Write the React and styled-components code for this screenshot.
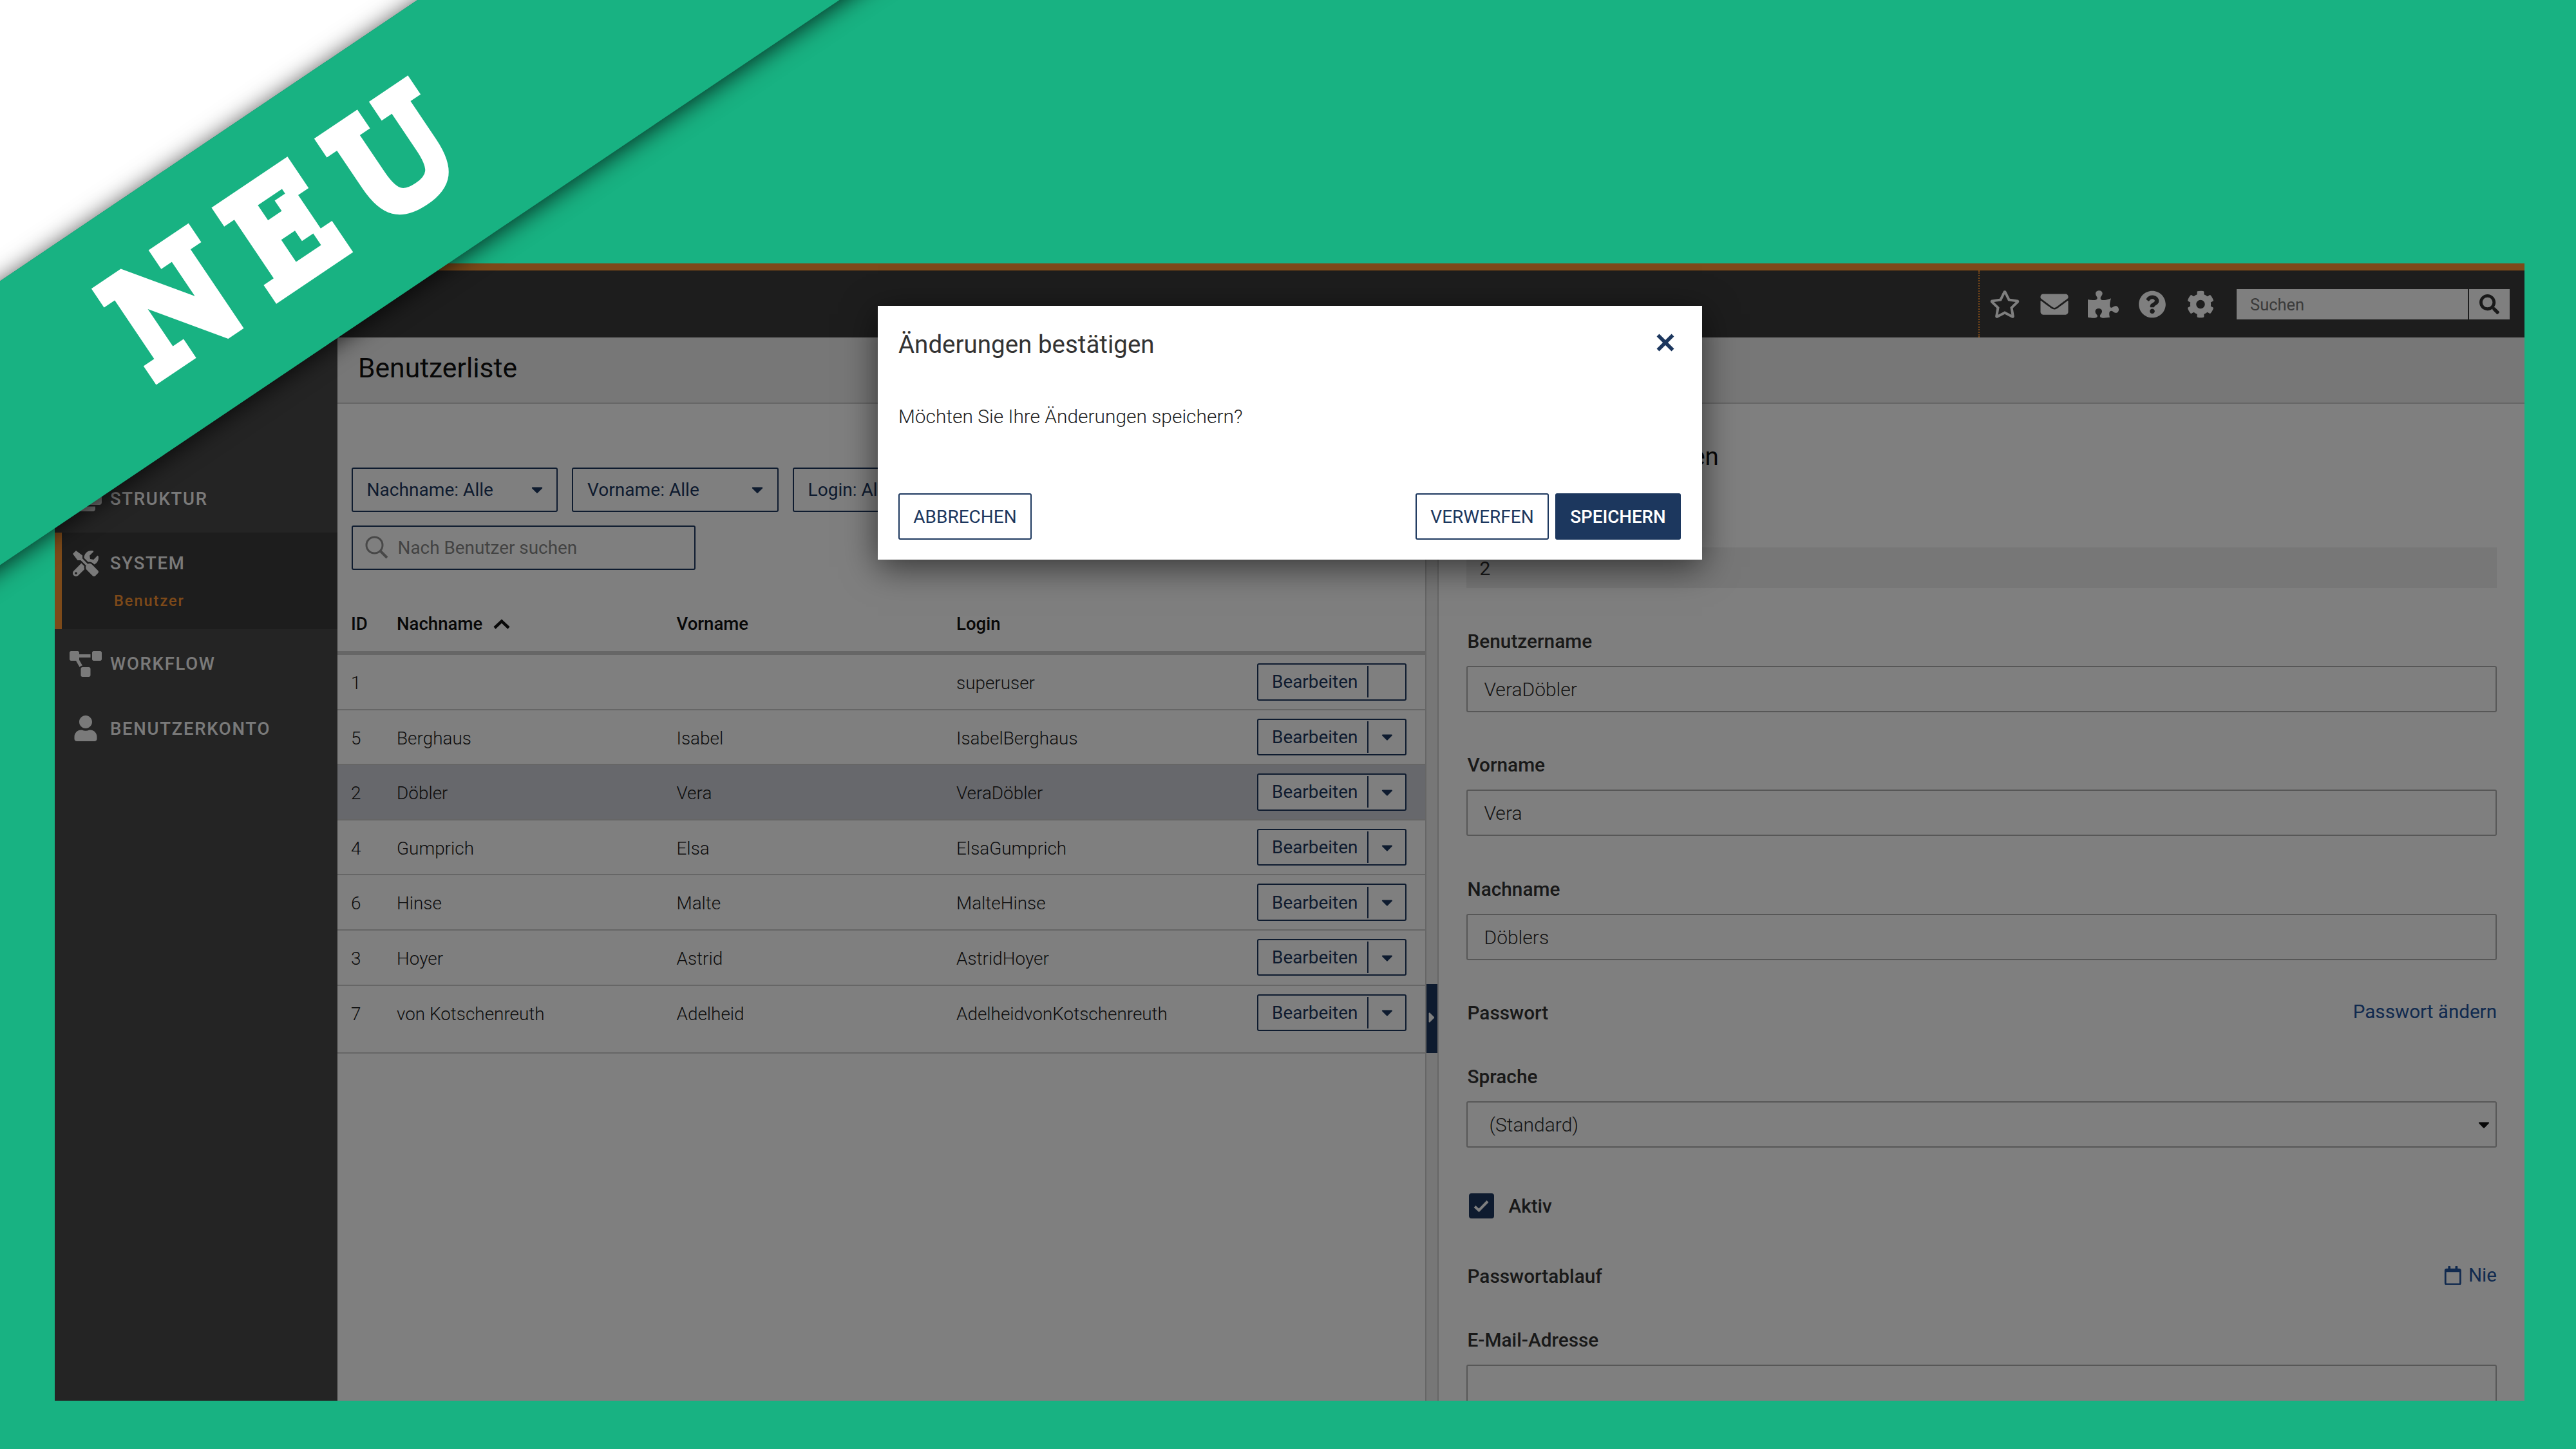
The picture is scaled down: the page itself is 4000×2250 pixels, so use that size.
import React from "react";
import styled, { createGlobalStyle } from "styled-components";
import {
  FaCaretDown,
  FaCaretRight,
  FaClone,
  FaCog,
  FaEnvelope,
  FaProjectDiagram,
  FaPuzzlePiece,
  FaQuestionCircle,
  FaRegCalendar,
  FaRegStar,
  FaSearch,
  FaTools,
  FaUser,
} from "react-icons/fa";

const filters = ["Nachname: Alle", "Vorname: Alle", "Login: Alle"];

const users = [
  { id: 1, nachname: "", vorname: "", login: "superuser", menu: false },
  { id: 5, nachname: "Berghaus", vorname: "Isabel", login: "IsabelBerghaus", menu: true },
  { id: 2, nachname: "Döbler", vorname: "Vera", login: "VeraDöbler", menu: true },
  { id: 4, nachname: "Gumprich", vorname: "Elsa", login: "ElsaGumprich", menu: true },
  { id: 6, nachname: "Hinse", vorname: "Malte", login: "MalteHinse", menu: true },
  { id: 3, nachname: "Hoyer", vorname: "Astrid", login: "AstridHoyer", menu: true },
  {
    id: 7,
    nachname: "von Kotschenreuth",
    vorname: "Adelheid",
    login: "AdelheidvonKotschenreuth",
    menu: true,
  },
];
const selectedId = 2;

function TopBar() {
  return (
    <TopBarWrap>
      <TopIcons>
        <FaRegStar />
        <FaEnvelope />
        <FaPuzzlePiece />
        <FaQuestionCircle />
        <FaCog />
      </TopIcons>
      <TopSearch>
        <TopSearchInput>Suchen</TopSearchInput>
        <TopSearchButton>
          <FaSearch />
        </TopSearchButton>
      </TopSearch>
    </TopBarWrap>
  );
}

function SideNav() {
  return (
    <Nav>
      <NavItem>
        <NavRow>
          <NavIcon $shift>
            <FaClone />
          </NavIcon>
          STRUKTUR
        </NavRow>
      </NavItem>
      <NavItem $active>
        <NavRow>
          <NavIcon>
            <FaTools />
          </NavIcon>
          SYSTEM
        </NavRow>
        <NavSub>Benutzer</NavSub>
      </NavItem>
      <NavItem>
        <NavRow>
          <NavIcon $wide>
            <FaProjectDiagram />
          </NavIcon>
          WORKFLOW
        </NavRow>
      </NavItem>
      <NavItem>
        <NavRow>
          <NavIcon>
            <FaUser />
          </NavIcon>
          BENUTZERKONTO
        </NavRow>
      </NavItem>
    </Nav>
  );
}

function UserList() {
  return (
    <ListPart>
      <FilterRow>
        {filters.map((label) => (
          <Filter key={label}>
            {label}
            <FaCaretDown />
          </Filter>
        ))}
      </FilterRow>
      <SearchField>
        <svg width="36" height="36" viewBox="0 0 36 36" fill="none" stroke="#909090" strokeWidth="3">
          <circle cx="14.5" cy="14.5" r="12.5" />
          <path d="M23.5 23.5 34 34" strokeWidth="4" />
        </svg>
        Nach Benutzer suchen
      </SearchField>
      <TableHead>
        <span>ID</span>
        <SortCell>
          Nachname
          <svg width="26" height="16" viewBox="0 0 26 16" fill="none" stroke="#111" strokeWidth="4.5">
            <path d="M2 14 13 3.5 24 14" />
          </svg>
        </SortCell>
        <span>Vorname</span>
        <span>Login</span>
      </TableHead>
      {users.map((user) => (
        <TableRow key={user.id} $selected={user.id === selectedId}>
          <Cell>{user.id}</Cell>
          <Cell>{user.nachname}</Cell>
          <Cell>{user.vorname}</Cell>
          <Cell>{user.login}</Cell>
          <EditButton>
            <EditLabel>Bearbeiten</EditLabel>
            <EditMenu>{user.menu && <FaCaretDown />}</EditMenu>
          </EditButton>
        </TableRow>
      ))}
    </ListPart>
  );
}

function UserForm() {
  return (
    <FormPart>
      <FormTitle>Benutzerinformationen</FormTitle>
      <ReadOnly>2</ReadOnly>
      <Label>Benutzername</Label>
      <Input>VeraDöbler</Input>
      <Label>Vorname</Label>
      <Input>Vera</Input>
      <Label>Nachname</Label>
      <Input>Döblers</Input>
      <FormRow>
        <Label>Passwort</Label>
        <Link>Passwort ändern</Link>
      </FormRow>
      <Label>Sprache</Label>
      <Select>
        (Standard)
        <FaCaretDown />
      </Select>
      <CheckRow>
        <Checkbox>
          <svg width="24" height="20" viewBox="0 0 24 20" fill="none" stroke="#fff" strokeWidth="4">
            <path d="M2 10.5 8.5 16.5 22 2.5" />
          </svg>
        </Checkbox>
        Aktiv
      </CheckRow>
      <FormRow>
        <Label>Passwortablauf</Label>
        <Link>
          <FaRegCalendar />
          Nie
        </Link>
      </FormRow>
      <Label>E-Mail-Adresse</Label>
      <Input />
    </FormPart>
  );
}

function ConfirmDialog() {
  return (
    <Dialog>
      <DialogHead>
        Änderungen bestätigen
        <svg width="28" height="28" viewBox="0 0 28 28" fill="none" stroke={navy} strokeWidth="5.6">
          <path d="M2.5 2.5 25.5 25.5M25.5 2.5 2.5 25.5" />
        </svg>
      </DialogHead>
      <DialogText>Möchten Sie Ihre Änderungen speichern?</DialogText>
      <DialogButtons>
        <DialogButton $width={207}>ABBRECHEN</DialogButton>
        <ButtonGroup>
          <DialogButton $width={207}>VERWERFEN</DialogButton>
          <DialogButton $width={195} $primary>
            SPEICHERN
          </DialogButton>
        </ButtonGroup>
      </DialogButtons>
    </Dialog>
  );
}

function App() {
  return (
    <Page>
      <GlobalStyle />
      <Frame>
        <TopBar />
        <Body>
          <SideNav />
          <Content>
            <TitleBar>Benutzerliste</TitleBar>
            <Panels>
              <UserList />
              <Splitter>
                <SplitHandle>
                  <FaCaretRight />
                </SplitHandle>
              </Splitter>
              <UserForm />
            </Panels>
          </Content>
        </Body>
        <Backdrop />
        <ConfirmDialog />
      </Frame>
      {/* Eckbanner, liegt über allem */}
      <Corner>
        <CornerPaper />
        <Ribbon>
          <RibbonText>NEU</RibbonText>
        </Ribbon>
      </Corner>
    </Page>
  );
}

export default App;

const navy = "#1c375e";
const orange = "#fa9432";

const GlobalStyle = createGlobalStyle`
  * {
    box-sizing: border-box;
  }
  body {
    margin: 0;
    font-family: Roboto, "Liberation Sans", sans-serif;
  }
`;

const Page = styled.div`
  position: relative;
  width: 4000px;
  height: 2250px;
  padding: 409px 80px 75px 85px;
  overflow: hidden;
  background: #18b282;
`;
const Frame = styled.div`
  position: relative;
  display: flex;
  flex-direction: column;
  width: 100%;
  height: 100%;
  overflow: hidden;
  background: #fff;
`;
const Backdrop = styled.div`
  position: absolute;
  inset: 0;
  background: rgba(0, 0, 0, 0.5);
`;

/* Kopfzeile */
const TopBarWrap = styled.header`
  display: flex;
  justify-content: flex-end;
  flex: none;
  height: 115px;
  padding-right: 23px;
  border-top: 11px solid ${orange};
  background: #3b3b3b;
`;
const TopIcons = styled.div`
  display: flex;
  align-items: center;
  width: 401px;
  padding-left: 15px;
  border-left: 2px dotted ${orange};
  color: #fff;
  font-size: 43px;

  svg {
    flex: none;
    width: 48px;
    margin-right: 28.5px;
  }
  svg:nth-child(3) {
    margin-right: 28px;
  }
  svg:nth-child(4) {
    margin-right: 27px;
  }
`;
const TopSearch = styled.div`
  display: flex;
  align-items: center;
  gap: 2px;
`;
const TopSearchInput = styled.div`
  width: 359px;
  height: 47px;
  padding-left: 21px;
  background: #fff;
  color: #757575;
  font-size: 25.5px;
  line-height: 48px;
`;
const TopSearchButton = styled.div`
  display: flex;
  align-items: center;
  justify-content: center;
  width: 63px;
  height: 47px;
  background: #fff;
  color: #333;
  font-size: 31px;
`;

/* Navigation */
const Body = styled.div`
  display: flex;
  flex: 1;
  min-height: 0;
`;
const Nav = styled.nav`
  flex: none;
  width: 439px;
  padding-top: 202px;
  background: #484848;
`;
const NavItem = styled.div`
  height: ${({ $active }) => ($active ? 150 : 100.5)}px;
  margin-bottom: ${({ $active }) => ($active ? 6 : 0)}px;
  padding-left: ${({ $active }) => ($active ? 12 : 23)}px;
  border-left: ${({ $active }) => ($active ? `11px solid ${orange}` : "none")};
  background: ${({ $active }) => ($active ? "#3a3a3a" : "transparent")};
`;
const NavRow = styled.div`
  display: flex;
  align-items: center;
  height: 96px;
  color: #f4f4f4;
  font-size: 27.5px;
  font-weight: 500;
  letter-spacing: 1.7px;
`;
const NavIcon = styled.span`
  display: flex;
  justify-content: ${({ $shift }) => ($shift ? "flex-end" : "center")};
  width: 50px;
  margin-right: 13px;

  svg {
    width: ${({ $wide }) => ($wide ? 50 : 40)}px;
    height: 40px;
  }
`;
const NavSub = styled.div`
  margin: -5px 0 0 69px;
  color: ${orange};
  font-size: 23.5px;
  font-weight: 500;
  line-height: 30px;
  letter-spacing: 2px;
`;

const Content = styled.main`
  display: flex;
  flex-direction: column;
  flex: 1;
  min-width: 0;
`;
const TitleBar = styled.div`
  flex: none;
  height: 103px;
  padding-left: 32px;
  border-bottom: 2px solid #ccc;
  background: #efefef;
  color: #111;
  font-size: 42.6px;
  line-height: 95px;
`;
const Panels = styled.div`
  display: flex;
  flex: 1;
  min-height: 0;
`;

/* Benutzerliste */
const ListPart = styled.section`
  flex: none;
  width: 1689px;
  padding-top: 98.5px;
  overflow: hidden;
`;
const FilterRow = styled.div`
  display: flex;
  gap: 22px;
  padding-left: 21.5px;
`;
const Filter = styled.div`
  display: flex;
  align-items: center;
  justify-content: space-between;
  flex: none;
  width: 320.5px;
  height: 69px;
  padding: 0 16px 0 22px;
  border: 2px solid ${navy};
  border-radius: 3px;
  color: ${navy};
  font-size: 28.1px;
`;
const SearchField = styled.div`
  display: flex;
  align-items: center;
  gap: 15px;
  width: 534.5px;
  height: 69px;
  margin: 21px 0 0 21.5px;
  padding-left: 19px;
  border: 2px solid ${navy};
  border-radius: 3px;
  color: #868686;
  font-size: 27.9px;
`;
const TableHead = styled.div`
  display: grid;
  grid-template-columns: 71px 434.5px 434.5px 467px 232px;
  align-items: center;
  height: 91px;
  margin-top: 41.5px;
  padding-left: 21px;
  border-bottom: 6px solid #ccc;
  color: #111;
  font-size: 27.6px;
  font-weight: 500;
`;
const SortCell = styled.span`
  display: flex;
  align-items: center;
  gap: 17px;
`;
const TableRow = styled.div`
  display: grid;
  grid-template-columns: 71px 434.5px 434.5px 467px 232px;
  align-items: start;
  height: 85.6px;
  padding: 13px 0 0 21px;
  border-bottom: 2px solid #ccc;
  background: ${({ $selected }) => ($selected ? "#ced0d9" : "transparent")};

  &:last-child {
    height: 105px;
  }
`;
const Cell = styled.span`
  color: #1a1a1a;
  font-size: 27.9px;
  font-weight: 300;
  line-height: 61px;
`;
const EditButton = styled.div`
  display: flex;
  align-items: center;
  height: 57.5px;
  border: 2px solid ${navy};
  border-radius: 3px;
  background: #fff;
  color: ${navy};
  font-size: 27.9px;
`;
const EditLabel = styled.span`
  width: 171px;
  padding-left: 21px;
  line-height: 49px;
  border-right: 2px solid ${navy};
`;
const EditMenu = styled.span`
  display: flex;
  justify-content: center;
  flex: 1;
`;

const Splitter = styled.div`
  flex: none;
  width: 21px;
  padding-top: 901px;
  border-left: 2px solid #ccc;
  border-right: 2px solid #ccc;
  background: #efefef;
`;
const SplitHandle = styled.div`
  display: flex;
  align-items: center;
  justify-content: center;
  height: 107px;
  padding-bottom: 4px;
  background: ${navy};
  color: #fff;
  font-size: 26px;
`;

/* Formular */
const FormPart = styled.section`
  display: flex;
  flex-direction: column;
  flex: 1;
  min-width: 0;
  padding: 57px 43px 0 42.5px;
  overflow: hidden;
`;
const FormTitle = styled.h2`
  margin: 0 0 116px;
  color: #111;
  font-size: 38.5px;
  font-weight: 400;
  line-height: 50px;
`;
const Label = styled.div`
  flex: none;
  margin-left: 2px;
  color: #333;
  font-size: 29.8px;
  font-weight: 500;
  line-height: 40px;
`;
const ReadOnly = styled.div`
  flex: none;
  height: 63px;
  margin-bottom: 62.5px;
  padding-left: 21px;
  background: #efefef;
  color: #333;
  font-size: 30px;
  line-height: 65px;
`;
const Input = styled.div`
  flex: none;
  height: 72px;
  margin: 18.3px 0 62.3px;
  padding-left: 26px;
  border: 2px solid #aeaeae;
  border-radius: 3px;
  color: #2a2a2a;
  font-size: 30px;
  font-weight: 300;
  line-height: 69px;
`;
const Select = styled(Input)`
  display: flex;
  align-items: center;
  justify-content: space-between;
  margin-bottom: 70.5px;
  padding: 0 4px 0 34px;

  svg {
    color: #111;
    font-size: 28px;
  }
`;
const FormRow = styled.div`
  display: flex;
  align-items: center;
  justify-content: space-between;
  flex: none;
  height: 40px;
  margin-bottom: 58.5px;
`;
const Link = styled.span`
  display: flex;
  align-items: center;
  gap: 9px;
  margin-top: -3px;
  color: #22549e;
  font-size: 29.6px;
  line-height: 37px;
`;
const CheckRow = styled.div`
  display: flex;
  align-items: center;
  gap: 23px;
  flex: none;
  height: 40px;
  margin: 0 0 69.5px 4px;
  color: #333;
  font-size: 29.7px;
  font-weight: 500;
  line-height: 44px;
`;
const Checkbox = styled.span`
  display: flex;
  align-items: center;
  justify-content: center;
  width: 39px;
  height: 39px;
  border-radius: 4px;
  background: ${navy};
`;

/* Dialog */
const Dialog = styled.div`
  position: absolute;
  top: 66px;
  left: 1278px;
  width: 1280px;
  height: 394px;
  padding: 34px 33px 32px 32px;
  background: #fff;
  box-shadow: 0 12px 50px rgba(0, 0, 0, 0.58);
`;
const DialogHead = styled.div`
  display: flex;
  align-items: center;
  justify-content: space-between;
  height: 50px;
  color: #333;
  font-size: 38.5px;

  svg {
    margin: -4px 10px 0 0;
  }
`;
const DialogText = styled.p`
  height: 40px;
  margin: 68px 0 98.5px;
  color: #222;
  font-size: 29.9px;
  font-weight: 300;
  line-height: 40px;
`;
const DialogButtons = styled.div`
  display: flex;
  justify-content: space-between;
`;
const ButtonGroup = styled.div`
  display: flex;
  gap: 10px;
`;
const DialogButton = styled.div`
  width: ${({ $width }) => $width}px;
  height: 72px;
  border: 2px solid ${navy};
  border-radius: 3px;
  background: ${({ $primary }) => ($primary ? navy : "#fff")};
  color: ${({ $primary }) => ($primary ? "#fff" : navy)};
  font-size: ${({ $primary }) => ($primary ? 27.7 : 28)}px;
  font-weight: ${({ $primary }) => ($primary ? 500 : 400)};
  line-height: 69px;
  text-align: center;
`;

/* Eckbanner */
const Corner = styled.div`
  position: absolute;
  top: 0;
  left: 0;
  transform: rotate(-33.95deg);
  transform-origin: 0 0;
`;
const CornerPaper = styled.div`
  width: 2600px;
  height: 1362px;
  margin: -1000px 0 0 -900px;
  background: #fff;
`;
const Ribbon = styled.div`
  display: flex;
  align-items: center;
  position: relative;
  width: 2600px;
  height: 365.5px;
  margin-left: -900px;
  padding-left: 769px;
  background: #18b282;
  box-shadow: 0 4px 36px rgba(0, 0, 0, 0.75);
`;
const RibbonText = styled.span`
  color: #fff;
  font-family: "DejaVu Serif", serif;
  font-size: 214px;
  line-height: 1;
  letter-spacing: 48px;
  -webkit-text-stroke: 24px #fff;
  transform: scaleX(0.95);
  transform-origin: 0 50%;
`;
